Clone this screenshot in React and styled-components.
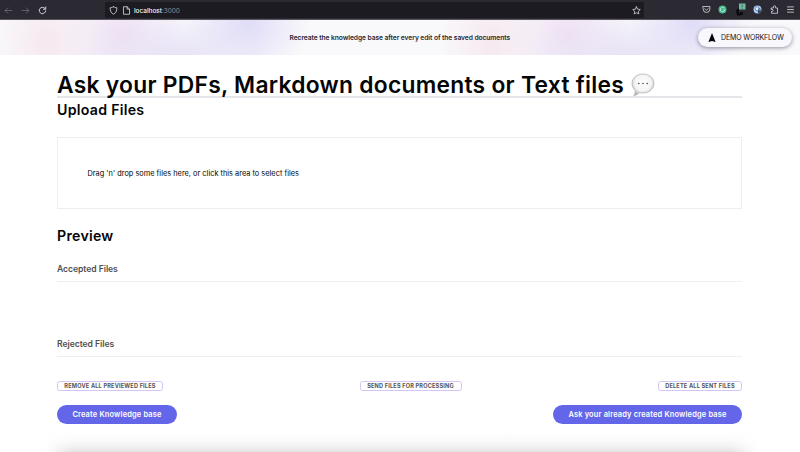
import React from "react";
import styled, { createGlobalStyle } from "styled-components";

const Global = createGlobalStyle`
  * { box-sizing: border-box; }
  html, body { margin: 0; background: #fff; }
  body { font-family: Inter, "Liberation Sans", sans-serif; color: #050505; overflow: hidden; }
  h1, h2, h3, p { margin: 0; }
  svg { display: block; flex: none; }
`;

const Page = styled.div`
  display: flex;
  flex-direction: column;
  height: 452px;
`;

const BrowserBar = styled.header`
  display: flex;
  align-items: center;
  flex: none;
  height: 20px;
  padding: 0 4px;
  background: #2b2a33;
  border-bottom: 1px solid #57565f;
`;

const NavIcons = styled.div`
  display: flex;
  align-items: center;
  gap: 8px;
  width: 101px;
  padding-top: 1px;
`;

const UrlField = styled.div`
  display: flex;
  align-items: center;
  gap: 4px;
  width: 539px;
  height: 16px;
  padding: 1px 3px 0 4px;
  border-radius: 2px;
  background: #1c1b22;
`;

const UrlText = styled.span`
  flex: 1;
  margin-left: -1px;
  padding-top: 1px;
  font-size: 6.5px;
  line-height: 14px;
  letter-spacing: -0.04px;
  color: #8f8e96;
  b { font-weight: 500; color: #f4f4f7; }
`;

const Extensions = styled.div`
  display: flex;
  align-items: center;
  justify-content: space-between;
  flex: 1;
  margin-left: 58px;
  padding-right: 1px;
`;

const Banner = styled.section`
  display: grid;
  grid-template-columns: 1fr auto 1fr;
  align-items: center;
  flex: none;
  height: 35px;
  padding-right: 8px;
  background:
    radial-gradient(ellipse 62px 52px at 248px 4px, #dfdcf7 0%, #dfdcf700 100%),
    radial-gradient(ellipse 100px 46px at 178px 36px, #e7e2f6 0%, #e7e2f600 100%),
    radial-gradient(ellipse 62px 70px at 122px 16px, #efe0f3 0%, #efe0f300 100%),
    radial-gradient(ellipse 55px 75px at 47px 22px, #f6e8f0 0%, #f6e8f000 100%),
    radial-gradient(ellipse 62px 52px at 692px 4px, #dfdcf7 0%, #dfdcf700 100%),
    radial-gradient(ellipse 100px 46px at 625px 36px, #e7e2f6 0%, #e7e2f600 100%),
    radial-gradient(ellipse 62px 70px at 568px 16px, #efe0f3 0%, #efe0f300 100%),
    radial-gradient(ellipse 55px 75px at 493px 22px, #f6e8f0 0%, #f6e8f000 100%),
    #f9f9fb;
`;

const BannerText = styled.p`
  grid-column: 2;
  width: 221px;
  margin-left: 8px;
  font-size: 6.7px;
  font-weight: 600;
  line-height: 10px;
  letter-spacing: -0.075px;
  white-space: nowrap;
  color: #252733;
`;

const WorkflowButton = styled.button`
  justify-self: end;
  display: flex;
  align-items: center;
  gap: 5px;
  width: 94px;
  height: 19px;
  margin-top: -1px;
  padding: 0 0 0 10px;
  border: 0;
  border-radius: 10px;
  background: #f8f7fc;
  box-shadow: 0 1px 4px rgba(45, 40, 65, 0.5);
  font: 400 7px/19px Inter, sans-serif;
  letter-spacing: -0.14px;
  white-space: nowrap;
  color: #111;
`;

const Main = styled.main`
  width: 685px;
  height: 397px;
  margin-left: 57px;
  padding-top: 14px;
`;

const Title = styled.h1`
  display: flex;
  align-items: center;
  gap: 7px;
  height: 29px;
  padding-top: 5px;
  border-bottom: 2px solid #e5e6e9;
  font-size: 22.8px;
  font-weight: 600;
  line-height: 30px;
  letter-spacing: 0.28px;
  white-space: nowrap;
`;

const Heading = styled.h2`
  margin-top: ${(p) => p.$top || 0};
  font-size: 14.2px;
  font-weight: 600;
  line-height: 24px;
  letter-spacing: 0.26px;
`;

const DropZone = styled.div`
  display: flex;
  align-items: center;
  height: 72px;
  margin-top: 15px;
  padding: 2px 0 0 29.5px;
  border: 1px solid #eeeeee;
  font-size: 7.35px;
  line-height: 12px;
  letter-spacing: 0.02px;
  color: #000;
`;

const FileGroup = styled.h3`
  height: ${(p) => p.$height};
  padding-top: ${(p) => p.$pad};
  border-bottom: 1px solid #efefef;
  font-size: 8.6px;
  font-weight: 600;
  line-height: 12px;
  letter-spacing: -0.05px;
  color: #505050;
`;

const Actions = styled.div`
  display: flex;
  justify-content: space-between;
  margin-top: ${(p) => p.$top};
`;

const SmallButton = styled.button`
  width: ${(p) => p.$width};
  height: 10px;
  padding: 0;
  border: 1px solid #d5c4f4;
  border-radius: 2.5px;
  background: #fff;
  font: 700 5.6px/8px Inter, sans-serif;
  letter-spacing: 0.18px;
  white-space: nowrap;
  color: #555;
`;

const PrimaryButton = styled.button`
  width: ${(p) => p.$width};
  height: 19px;
  padding: 0;
  border: 0;
  border-radius: 10px;
  background: #6366e8;
  font: 600 7.45px/19px Inter, sans-serif;
  letter-spacing: 0.17px;
  white-space: nowrap;
  color: #fff;
`;

const FooterFade = styled.div`
  height: 22px;
  margin: 7px -15px 0 -12px;
  background: linear-gradient(to bottom, #fff0 0%, #fafafa 45%, #f1f1f1 70%, #e0e0e0 100%);
  mask-image: linear-gradient(to right, transparent, #000 28px, #000 calc(100% - 28px), transparent);
`;

const Icon = ({ size = 9, color = "#d5d4da", width = 1.1, children }) => (
  <svg width={size} height={size} viewBox="0 0 12 12" fill="none" stroke={color} strokeWidth={width} strokeLinecap="round" strokeLinejoin="round">
    {children}
  </svg>
);

const SpeechBubble = () => (
  <svg width="24" height="24" viewBox="0 0 24 24">
    <defs>
      <radialGradient id="bubble" cx="50%" cy="42%" r="58%">
        <stop offset="0" stopColor="#ffffff" />
        <stop offset="0.65" stopColor="#f4f4f4" />
        <stop offset="1" stopColor="#b8b8b8" />
      </radialGradient>
    </defs>
    <path d="M12 1C5.800 1 1 5 1 10.400c0 3 1.500 5.600 3.300 7.300 0 1.800-.5 3.300-1.500 4.800 2.300-.1 4.300-1.200 5.600-2.900 1.100.3 2.300.4 3.600.4 6.200 0 11-4.200 11-9.600S18.200 1 12 1Z" fill="url(#bubble)" stroke="#a7a7a7" strokeWidth=".6" />
    <g fill="#444"><circle cx="7.800" cy="10.500" r=".8" /><circle cx="12" cy="10.500" r=".8" /><circle cx="16.200" cy="10.500" r=".8" /></g>
  </svg>
);

export default function App() {
  return (
    <Page>
      <Global />
      <BrowserBar>
        <NavIcons>
          <Icon color="#6c6b73"><path d="M10.500 6h-9M5 2.500 1.500 6 5 9.500" /></Icon>
          <Icon color="#6c6b73"><path d="M1.500 6h9M7 2.500 10.500 6 7 9.500" /></Icon>
          <Icon width={1.3}><path d="M9.300 3.200A4.300 4.300 0 1 0 10.300 6.500M10.300 1.300v3H7.300" /></Icon>
        </NavIcons>
        <UrlField>
          <Icon><path d="M6 1c1.500 1 3 1.300 4.500 1.300 0 4-1 7-4.500 8.700C2.500 9.300 1.500 6.300 1.500 2.300 3 2.300 4.500 2 6 1Z" /></Icon>
          <Icon><path d="M2.500 1h4.300L10 4.200V11H2.500ZM6.800 1v3.200H10" /></Icon>
          <UrlText><b>localhost</b>:3000</UrlText>
          <Icon><path d="m6 1 1.500 3.200 3.500.5-2.500 2.400.6 3.500L6 9 2.900 10.600l.6-3.500L1 4.700l3.500-.5Z" /></Icon>
        </UrlField>
        <Extensions>
          <Icon><path d="M1.500 2h9v3.500a4.500 4.500 0 0 1-9 0ZM3.800 5 6 7l2.200-2" /></Icon>
          <svg width="9" height="9" viewBox="0 0 12 12"><circle cx="6" cy="6" r="5.300" fill="#43b88d" /><path d="M8.500 4.300A3 3 0 1 0 9 6.600H7" fill="none" stroke="#d6f5e9" strokeWidth="1" /></svg>
          <svg width="11" height="14" viewBox="0 0 11 14"><path d="M1 7.500 4 5v6l1.500-2H8v2.500L5 12.500H2Z" fill="#090910" /><rect x="4" y="0.500" width="6.500" height="6" fill="#70b9a0" /><path d="M7.200 1.700v2.600M7.200 5v.6" stroke="#26584a" strokeWidth=".8" /></svg>
          <svg width="9" height="9" viewBox="0 0 12 12"><circle cx="6" cy="6" r="5.300" fill="#a9c9f3" /><circle cx="5.500" cy="5" r="2.600" fill="#e5effc" stroke="#537cba" /><path d="M6.500 7h4v3.500h-4Z" fill="#34445f" /><path d="M7.300 7V6a1.200 1.200 0 0 1 2.400 0v1" fill="none" stroke="#34445f" /></svg>
          <Icon><path d="M2 4h2.500V2.500a1.500 1.500 0 0 1 3 0V4H10v7H2V8.500h1a1.200 1.200 0 0 0 0-2.500H2Z" /></Icon>
          <Icon><path d="M2 2.500h8M2 6h8M2 9.500h8" /></Icon>
        </Extensions>
      </BrowserBar>
      <Banner>
        <BannerText>Recreate the knowledge base after every edit of the saved documents</BannerText>
        <WorkflowButton>
          <svg width="8" height="9" viewBox="0 0 8 9"><path d="M4 0 7.600 9 4 7.900.4 9Z" fill="#050505" /></svg>
          DEMO WORKFLOW
        </WorkflowButton>
      </Banner>
      <Main>
        <Title>Ask your PDFs, Markdown documents or Text files <SpeechBubble /></Title>
        <Heading>Upload Files</Heading>
        <DropZone>Drag 'n' drop some files here, or click this area to select files</DropZone>
        <Heading $top="15px">Preview</Heading>
        <FileGroup $height="34px" $pad="15px">Accepted Files</FileGroup>
        <FileGroup $height="75px" $pad="56px">Rejected Files</FileGroup>
        <Actions $top="24px">
          <SmallButton $width="106px">REMOVE ALL PREVIEWED FILES</SmallButton>
          <SmallButton $width="102px">SEND FILES FOR PROCESSING</SmallButton>
          <SmallButton $width="84px">DELETE ALL SENT FILES</SmallButton>
        </Actions>
        <Actions $top="14px">
          <PrimaryButton $width="120px">Create Knowledge base</PrimaryButton>
          <PrimaryButton $width="189px">Ask your already created Knowledge base</PrimaryButton>
        </Actions>
        <FooterFade />
      </Main>
    </Page>
  );
}
